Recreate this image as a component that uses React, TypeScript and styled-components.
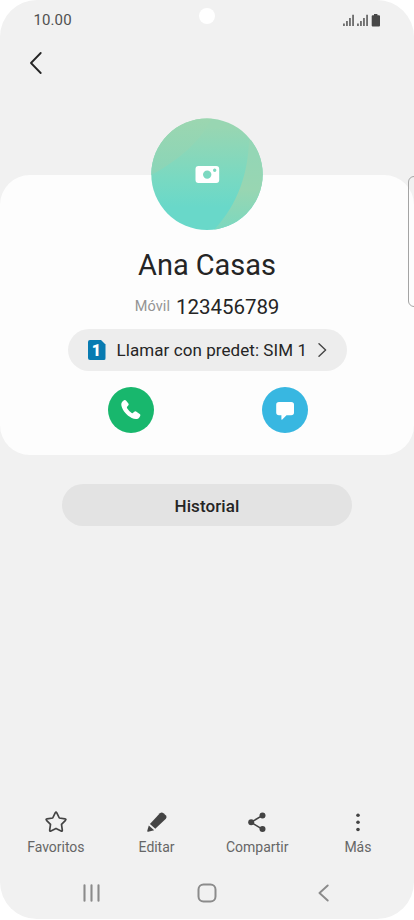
import React from "react";
import styled, { createGlobalStyle } from "styled-components";

const GlobalStyle = createGlobalStyle`
  *, *::before, *::after { box-sizing: border-box; }
  body { margin: 0; background: #fff; font-family: Roboto, "Liberation Sans", sans-serif; }
  button { font: inherit; color: inherit; border: 0; padding: 0; background: none; }
  svg { display: block; flex: none; }
`;

const Screen = styled.main`
  position: relative;
  width: 414px;
  height: 919px;
  margin-bottom: 1px;
  display: flex;
  flex-direction: column;
  overflow: hidden;
  border-radius: 37px;
  background: #f1f1f1;
  color: #252525;
`;

const StatusBar = styled.header`
  display: flex;
  justify-content: space-between;
  align-items: center;
  height: 40px;
  padding: 0 33px 0 33.5px;
`;

const Clock = styled.time`
  font-size: 15px;
  line-height: 20px;
  letter-spacing: 0.1px;
  color: #505050;
`;

const PunchHole = styled.span`
  position: absolute;
  top: 8px;
  left: 199px;
  width: 16px;
  height: 16px;
  border-radius: 50%;
  background: #fff;
`;

const TitleBar = styled.nav`
  height: 135px;
  padding: 12px 0 0 29.5px;
`;

const Card = styled.section`
  display: flex;
  flex-direction: column;
  align-items: center;
  height: 280px;
  border-radius: 30px;
  background: #fdfdfd;
`;

const Avatar = styled.button`
  width: 112px;
  height: 112px;
  margin-top: -57px;
`;

const Name = styled.h1`
  margin: 17px 0 0;
  font-size: 29px;
  line-height: 36px;
  font-weight: 400;
  letter-spacing: -0.05px;
`;

const PhoneLine = styled.p`
  display: flex;
  align-items: baseline;
  gap: 6px;
  margin: 12px 0 0;
  height: 24px;
  line-height: 24px;
`;

const PhoneType = styled.span`
  padding-bottom: 2px;
  align-self: flex-start;
  font-size: 14.5px;
  letter-spacing: 0.1px;
  color: #949494;
`;

const PhoneNumber = styled.span`
  font-size: 20.5px;
  letter-spacing: -0.05px;
`;

const SimButton = styled.button`
  display: flex;
  align-items: center;
  width: 279px;
  height: 42px;
  margin-top: 10px;
  padding: 0 19px 0 20px;
  border-radius: 21px;
  background: #ededed;
`;

const SimBadge = styled.span`
  display: grid;
  place-items: center;
  width: 18px;
  height: 20px;
  padding-top: 1px;
  margin-right: 11px;
  border-radius: 2px;
  background: #087bb1;
  clip-path: polygon(0 0, 75% 0, 100% 22%, 100% 100%, 0 100%);
  color: #fff;
  font-size: 16px;
  line-height: 19px;
  font-weight: 900;
`;

const SimLabel = styled.span`
  flex: 1;
  text-align: left;
  white-space: nowrap;
  font-size: 17px;
  letter-spacing: 0.07px;
`;

const Actions = styled.div`
  display: flex;
  gap: 108px;
  margin-top: 16px;
  padding-left: 2px;
`;

const RoundButton = styled.button<{ $color: string }>`
  display: grid;
  place-items: center;
  width: 46px;
  height: 46px;
  border-radius: 50%;
  background: ${(p) => p.$color};
`;

const HistoryButton = styled.button`
  align-self: center;
  width: 290px;
  height: 42px;
  margin-top: 29px;
  border-radius: 21px;
  background: #e3e3e3;
  font-size: 17px;
  line-height: 44px;
  font-weight: 500;
  letter-spacing: 0.1px;
`;

const Toolbar = styled.nav`
  display: grid;
  grid-template-columns: repeat(4, 100.7px);
  margin-top: auto;
  padding-left: 5.5px;
  height: 57px;
`;

const ToolItem = styled.button`
  display: flex;
  flex-direction: column;
  align-items: center;
  gap: 3px;
  color: #666;
  font-size: 14px;
  line-height: 20px;
  letter-spacing: -0.03px;
`;

const SystemNav = styled.nav`
  display: grid;
  grid-template-columns: repeat(3, 116px);
  justify-content: center;
  justify-items: center;
  align-items: center;
  height: 52px;
`;

const EdgePanel = styled.span`
  position: absolute;
  top: 176px;
  left: 408px;
  width: 14px;
  height: 131px;
  border: 1px solid #a4a4a4;
  border-radius: 6px;
`;

const Signal = () => (
  <svg width="12" height="12" viewBox="0 0 12 12" fill="#505050">
    <path d="M.2 9.5h1.5V12H.2zM3.2 7h1.5v5H3.2zM6.2 4h1.5v8H6.2zM9.3.7h1.5V12H9.3z" />
  </svg>
);

const StatusIcons = styled.div`
  display: flex;
  align-items: center;
  gap: 2px;
`;

const Battery = () => (
  <svg width="10" height="13" viewBox="0 0 10 13" fill="#484848">
    <path d="M3 0h3.4v1.3H8q1 0 1 1v9.2q0 1-1 1H1.7q-1 0-1-1V2.3q0-1 1-1H3z" />
  </svg>
);

const AvatarArt = () => (
  <svg width="112" height="112" viewBox="0 0 112 112">
    <defs>
      <linearGradient id="base" x1="0" y1="0" x2="0" y2="1">
        <stop offset="0.08" stopColor="#98d6b2" />
        <stop offset="0.55" stopColor="#78d9c2" />
        <stop offset="0.8" stopColor="#69d8c9" />
      </linearGradient>
      <linearGradient id="side" x1="0" y1="0" x2="0" y2="1">
        <stop offset="0.2" stopColor="#94d6b5" />
        <stop offset="0.55" stopColor="#98d6b2" />
        <stop offset="1" stopColor="#7bd8bf" />
      </linearGradient>
      <linearGradient id="corner" x1="0" y1="0" x2="0" y2="1">
        <stop offset="0" stopColor="#9cd6b0" />
        <stop offset="1" stopColor="#89d5b8" />
      </linearGradient>
      <clipPath id="disc"><circle cx="56" cy="56.3" r="55.7" /></clipPath>
    </defs>
    <g clipPath="url(#disc)">
      <path fill="url(#base)" d="M0 0h112v112H0z" />
      <path fill="url(#corner)" d="M0 0h61C49 23 30 41 0 57z" />
      <path fill="url(#side)" d="M98 22C97 56 87 86 63 112h49V22z" />
    </g>
    <path
      fill="#fff"
      fillRule="evenodd"
      d="M47.5 48h17.7q3 0 3 3v11q0 3-3 3H47.5q-3 0-3-3V51q0-3 3-3zM56.2 52.4a4.2 4.2 0 1 0 0 8.4 4.2 4.2 0 0 0 0-8.4zM63.7 50.5a1.7 1.7 0 1 0 0 3.4 1.7 1.7 0 0 0 0-3.4z"
    />
  </svg>
);

const Line = ({ w, h, d, color, weight }: { w: number; h: number; d: string; color: string; weight: number }) => (
  <svg width={w} height={h} viewBox={`0 0 ${w} ${h}`} fill="none" stroke={color} strokeWidth={weight} strokeLinecap="round" strokeLinejoin="round">
    <path d={d} />
  </svg>
);

const Phone = () => (
  <svg width="22" height="22" viewBox="0 0 22 22" fill="#fff">
    <path d="M2.4 2.5 4 1.3Q5.2.6 6.2 1.8l2.2 2.7q.8 1.1-.2 2.1L7.1 7.8q-.5.7 0 1.5 1.6 2.7 4.6 4.6.8.5 1.4-.1l1.2-1.1q.8-.8 1.8-.1l3.6 2.4q1.1.8.5 1.9l-.9 1.5c-1.4 2.2-4.8 1.9-7.6.5-5-2.4-9-6.9-10.2-11.8-.4-2-.2-3.5 1-4.7z" />
  </svg>
);

const Bubble = () => (
  <svg width="20" height="20" viewBox="0 0 20 20" fill="#fff">
    <path d="M4 1.9h12.2q2.8 0 2.8 2.8v7.8q0 2.8-2.8 2.8h-4.7l-4.2 4.1q-.9.7-.9-.4v-3.7H4q-2.8 0-2.8-2.8V4.7q0-2.8 2.8-2.8z" />
  </svg>
);

const Star = () => (
  <svg width="24" height="24" viewBox="0 0 24 24" fill="none" stroke="#444" strokeWidth="1.7" strokeLinejoin="round">
    <path d="M11.2 2.9q.8-1.4 1.6 0l2.5 5.1 5.7.9q1.5.3.5 1.4l-4 4.1.8 5.7q.2 1.5-1.2.9L12 18.4 6.9 21q-1.4.6-1.2-.9l.8-5.7-4-4.1q-1-1.1.5-1.4l5.7-.9z" />
  </svg>
);

const Pencil = () => (
  <svg width="24" height="24" viewBox="0 0 24 24" fill="#444">
    <path d="m4.9 14 10-10.7q1.8-1.7 3.6-.1l2.2 2q1.8 1.7.2 3.6l-10.6 10z" />
    <path d="m3.8 15.4 5.4 4.8-6 1.6q-1.1.2-1-.8z" />
  </svg>
);

const Share = () => (
  <svg width="24" height="24" viewBox="0 0 24 24" fill="#444" stroke="#444" strokeWidth="1.6">
    <path fill="none" d="M17.2 5.6 6 12.3l11.2 6.8" />
    <g stroke="none">
      <circle cx="17.5" cy="5.6" r="3" />
      <circle cx="6.2" cy="12.3" r="3" />
      <circle cx="17.5" cy="19.1" r="3" />
    </g>
  </svg>
);

const Dots = () => (
  <svg width="24" height="24" viewBox="0 0 24 24" fill="#444">
    <circle cx="12" cy="5.2" r="1.8" />
    <circle cx="12" cy="12.3" r="1.8" />
    <circle cx="12" cy="19.5" r="1.8" />
  </svg>
);

const tools = [
  { label: "Favoritos", Icon: Star },
  { label: "Editar", Icon: Pencil },
  { label: "Compartir", Icon: Share },
  { label: "Más", Icon: Dots },
];

export default function App() {
  return (
    <>
      <GlobalStyle />
      <Screen>
        <StatusBar>
          <Clock>10.00</Clock>
          <StatusIcons>
            <Signal />
            <Signal />
            <Battery />
          </StatusIcons>
        </StatusBar>
        <PunchHole />
        <TitleBar>
          <button aria-label="Atrás">
            <Line w={12} h={22} d="M10.7 1 1 11l9.7 10" color="#252525" weight={1.8} />
          </button>
        </TitleBar>
        <Card>
          <Avatar aria-label="Foto">
            <AvatarArt />
          </Avatar>
          <Name>Ana Casas</Name>
          <PhoneLine>
            <PhoneType>Móvil</PhoneType>
            <PhoneNumber>123456789</PhoneNumber>
          </PhoneLine>
          <SimButton>
            <SimBadge>1</SimBadge>
            <SimLabel>Llamar con predet: SIM 1</SimLabel>
            <Line w={10} h={14} d="M1 .8 7.6 7 1 13.2" color="#444" weight={1.4} />
          </SimButton>
          <Actions>
            <RoundButton $color="#18b76d" aria-label="Llamar">
              <Phone />
            </RoundButton>
            <RoundButton $color="#38b7e1" aria-label="Mensaje">
              <Bubble />
            </RoundButton>
          </Actions>
        </Card>
        <HistoryButton>Historial</HistoryButton>
        <Toolbar>
          {tools.map(({ label, Icon }) => (
            <ToolItem key={label}>
              <Icon />
              {label}
            </ToolItem>
          ))}
        </Toolbar>
        <SystemNav>
          <Line w={18} h={18} d="M2.5 1.3v15.4M9.5 1.3v15.4M16.5 1.3v15.4" color="#8b8b8b" weight={2.1} />
          <svg width="20" height="20" viewBox="0 0 20 20" fill="none" stroke="#8b8b8b" strokeWidth="2">
            <rect x="1.5" y="1.5" width="17" height="17" rx="5" />
          </svg>
          <Line w={12} h={18} d="M10.7 1.5 2.5 9l8.2 7.5" color="#8b8b8b" weight={1.9} />
        </SystemNav>
        <EdgePanel />
      </Screen>
    </>
  );
}
